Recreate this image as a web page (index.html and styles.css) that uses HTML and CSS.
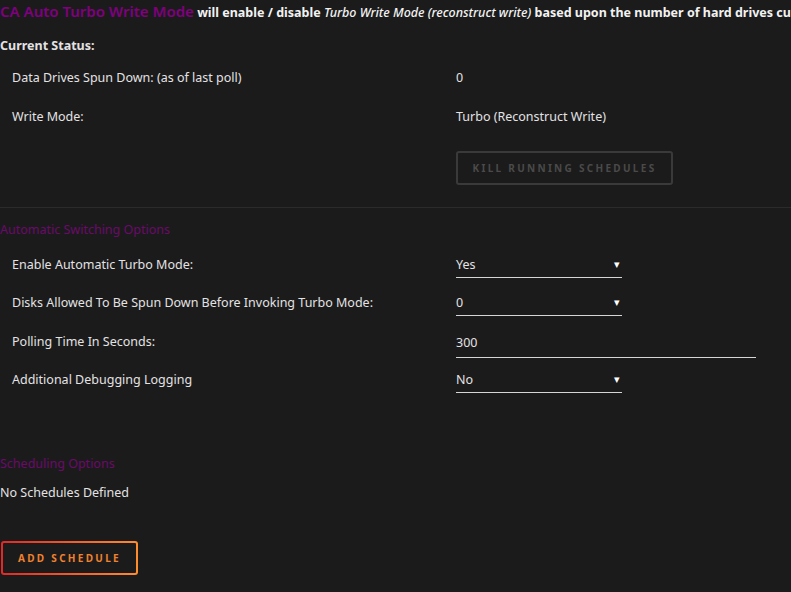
FILE: index.html
```html
<!DOCTYPE html>
<html lang="en">
<head>
  <meta charset="UTF-8">
  <title>CA Auto Turbo Write Mode</title>
  <link rel="stylesheet" href="styles.css">
</head>
<body>
  <p class="intro">
    <span class="title">CA Auto Turbo Write Mode</span>
    will enable / disable <em>Turbo Write Mode (reconstruct write)</em> based upon the number of hard drives currently spun down
  </p>

  <div class="status-head">Current Status:</div>

  <div class="row first">
    <div class="label">Data Drives Spun Down: (as of last poll)</div>
    <div class="value">0</div>
  </div>
  <div class="row">
    <div class="label">Write Mode:</div>
    <div class="value">Turbo (Reconstruct Write)</div>
  </div>
  <div class="row row-btn">
    <div class="label"></div>
    <div class="value"><button class="btn-kill" disabled>Kill Running Schedules</button></div>
  </div>

  <hr class="divider">

  <div class="section">Automatic Switching Options</div>

  <div class="row opt first-opt">
    <div class="label">Enable Automatic Turbo Mode:</div>
    <div class="value"><div class="select">Yes<span class="caret">&#9662;</span></div></div>
  </div>
  <div class="row opt">
    <div class="label">Disks Allowed To Be Spun Down Before Invoking Turbo Mode:</div>
    <div class="value"><div class="select">0<span class="caret">&#9662;</span></div></div>
  </div>
  <div class="row opt">
    <div class="label">Polling Time In Seconds:</div>
    <div class="value"><div class="text-input">300</div></div>
  </div>
  <div class="row opt">
    <div class="label">Additional Debugging Logging</div>
    <div class="value"><div class="select">No<span class="caret">&#9662;</span></div></div>
  </div>

  <div class="section section-sched">Scheduling Options</div>
  <div class="empty">No Schedules Defined</div>

  <button class="btn-add">Add Schedule</button>
</body>
</html>
```

FILE: styles.css
```css
body {
  margin: 0;
  background: #1b1b1b;
  color: #e4e2e4;
  font-family: "Noto Sans", sans-serif;
  font-size: 12.5px;
  overflow: hidden;
}

.intro {
  margin: 0;
  padding-top: 1px;
  white-space: nowrap;
  overflow: hidden;
  font-weight: bold;
  color: #f2f2f2;
  line-height: 20px;
}

.title {
  color: #800080;
  font-size: 15px;
  font-weight: 600;
}

.intro em {
  font-weight: 500;
}

.status-head {
  margin-top: 13px;
  font-weight: bold;
  line-height: 20px;
}

.row {
  display: grid;
  grid-template-columns: 456px 1fr;
  align-items: center;
  height: 39px;
}

.row.first {
  margin-top: 2px;
}

.label {
  padding-left: 12px;
}

.row-btn {
  height: auto;
  margin-top: 15px;
}

.btn-kill {
  width: 217px;
  height: 34px;
  background: transparent;
  border: 2px solid #3a3a3a;
  border-radius: 3px;
  color: #4a4a4a;
  font-family: inherit;
  font-size: 10px;
  font-weight: bold;
  letter-spacing: 2.3px;
  text-transform: uppercase;
  padding: 0;
}

.divider {
  border: 0;
  border-top: 1px solid #2b2b2b;
  margin: 22px 0 0;
}

.section {
  color: #6c0a6c;
  margin-top: 12px;
  line-height: 20px;
}

.opt {
  height: 38.5px;
}

.first-opt {
  margin-top: 5px;
}

.select,
.text-input {
  position: relative;
  width: 166px;
  border-bottom: 1px solid #d6d6d6;
  padding: 6px 0 4px;
  line-height: 16px;
}

.text-input {
  width: 300px;
  padding: 10px 0 6px;
}

.caret {
  position: absolute;
  right: 2px;
  top: 5px;
  font-size: 11px;
  color: #fff;
}

.section-sched {
  margin-top: 55px;
}

.empty {
  margin-top: 9px;
  line-height: 20px;
}

.btn-add {
  display: block;
  margin: 38px 0 0 1px;
  width: 137px;
  height: 34px;
  border: 2px solid transparent;
  border-radius: 3px;
  background:
    linear-gradient(#1b1b1b, #1b1b1b) padding-box,
    linear-gradient(90deg, #e22828, #ff8c2f) border-box;
  color: #f0822e;
  font-family: inherit;
  font-size: 10px;
  font-weight: bold;
  letter-spacing: 2.3px;
  text-transform: uppercase;
  padding: 0;
}
```
